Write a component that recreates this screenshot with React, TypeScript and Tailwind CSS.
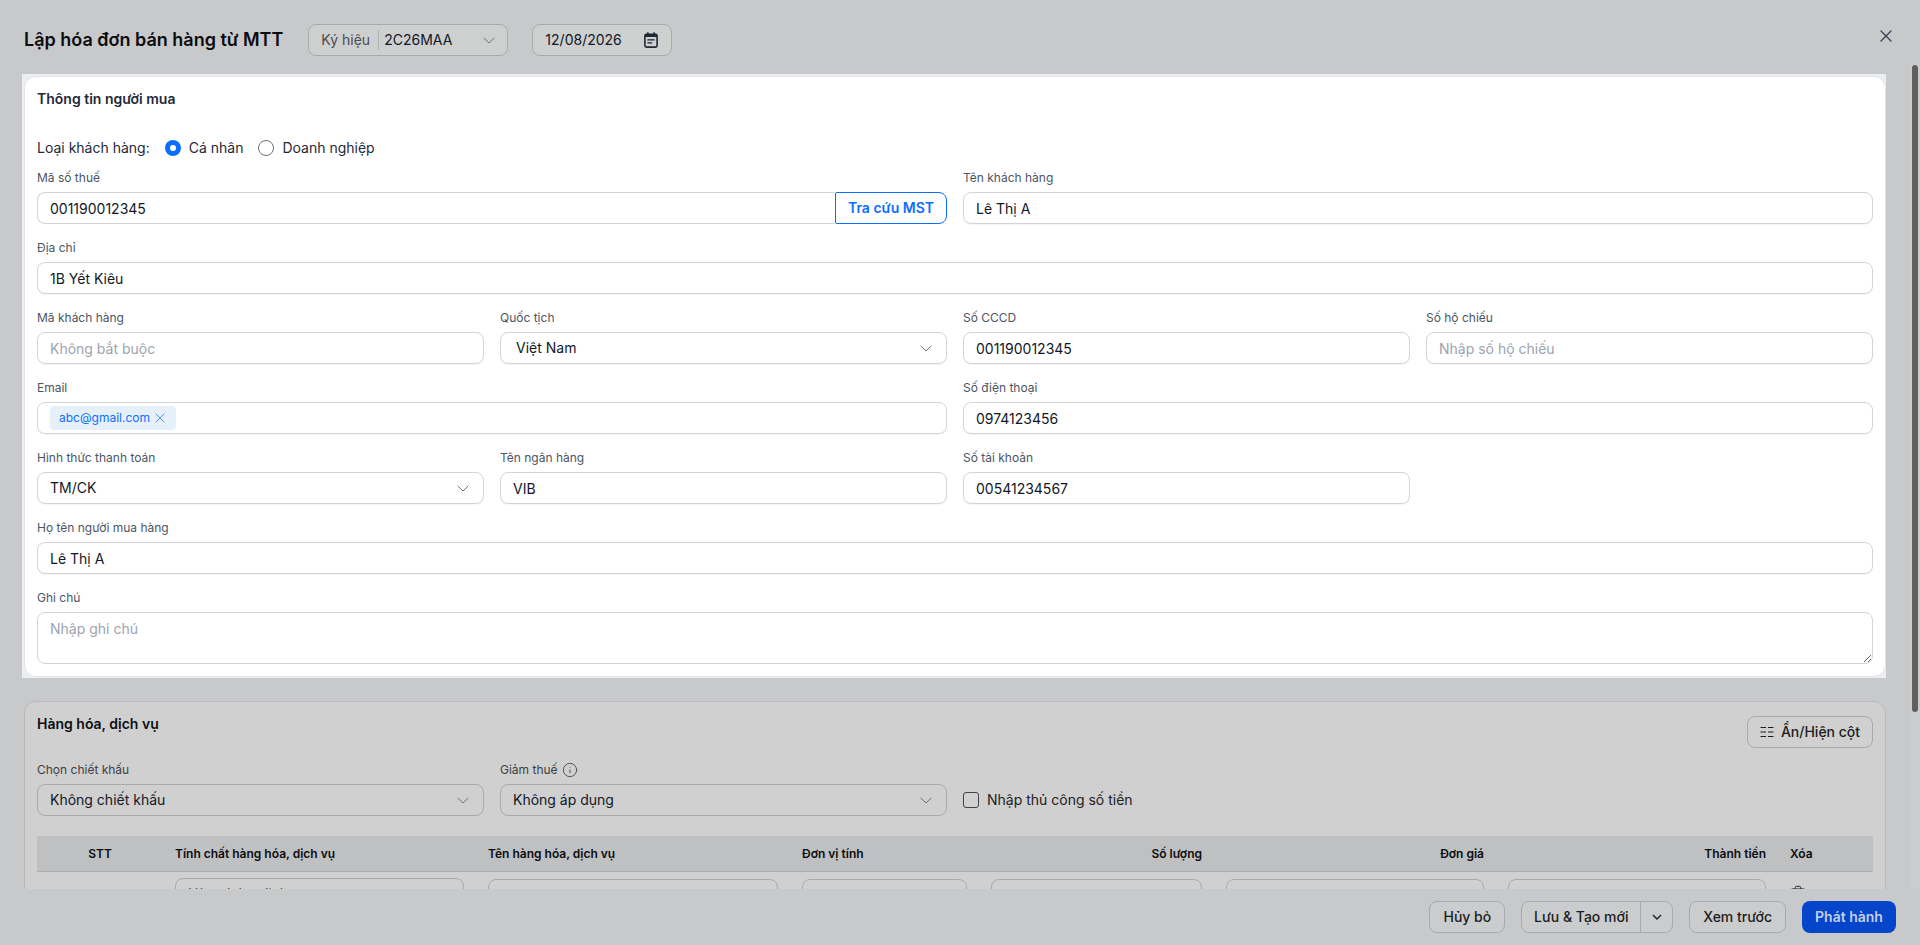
import { Info, Trash2, X } from "lucide-react";
import type { ReactNode } from "react";

function Chevron({ className = "text-[#6b7280]" }: { className?: string }) {
  return (
    <svg width="12" height="7" viewBox="0 0 12 7" fill="none" className={`shrink-0 ${className}`}>
      <path d="M0.6 0.8 L6 6 L11.4 0.8" stroke="currentColor" strokeWidth="1" />
    </svg>
  );
}

function Field({ label, span = "", dim = false, children }: { label: ReactNode; span?: string; dim?: boolean; children: ReactNode }) {
  return (
    <div className={`flex flex-col ${span}`}>
      <div className={`mb-[6px] flex h-4 items-center gap-1 text-xs leading-4 ${dim ? "text-[#3c3f45]" : "text-[#4b5563]"}`}>{label}</div>
      {children}
    </div>
  );
}

function TextBox({ value, placeholder }: { value?: string; placeholder?: string }) {
  return (
    <input
      readOnly
      value={value ?? ""}
      placeholder={placeholder}
      className="h-8 w-full rounded-lg border border-[#d1d5db] bg-white px-3 text-sm text-[#111827] shadow-[0_1px_1px_rgba(0,0,0,0.04)] outline-none placeholder:text-[#9ca3af]"
    />
  );
}

function SelectBox({ value, dim = false, pad = "pl-3" }: { value: string; dim?: boolean; pad?: string }) {
  return (
    <div className={`flex h-8 items-center justify-between rounded-lg border pr-[14px] text-sm text-[#111827] ${pad} ${dim ? "border-[#a9aaad]" : "border-[#d1d5db] bg-white shadow-[0_1px_1px_rgba(0,0,0,0.04)]"}`}>
      <span>{value}</span>
      <Chevron />
    </div>
  );
}

function Radio({ on, label }: { on?: boolean; label: string }) {
  return (
    <span className="flex items-center gap-2">
      {on ? (
        <span className="flex size-4 items-center justify-center rounded-full bg-[#0d6efd]">
          <span className="size-[6px] rounded-full bg-white" />
        </span>
      ) : (
        <span className="size-4 rounded-full border border-[#6b7280] bg-white" />
      )}
      <span>{label}</span>
    </span>
  );
}

function CalendarIcon() {
  return (
    <svg width="14" height="16" viewBox="0 0 14 16" fill="none" className="text-[#1f2937]">
      <rect x="0.9" y="2.4" width="12.2" height="12.7" rx="1.6" stroke="currentColor" strokeWidth="1.6" />
      <rect x="0.9" y="2.4" width="12.2" height="2.6" fill="currentColor" />
      <rect x="3" y="0.4" width="1.7" height="3" fill="currentColor" />
      <rect x="9.3" y="0.4" width="1.7" height="3" fill="currentColor" />
      <rect x="3.4" y="7.2" width="7.2" height="1.3" fill="currentColor" />
      <rect x="3.4" y="10.2" width="4.8" height="1.3" fill="currentColor" />
    </svg>
  );
}

function ColumnsIcon() {
  return (
    <svg width="14" height="12" viewBox="0 0 14 12" fill="none" stroke="currentColor" strokeWidth="1.2">
      <path d="M0.5 1.5H6M8 1.5H13.5M0.5 6H6M8 6H13.5M0.5 10.5H6M8 10.5H13.5" />
    </svg>
  );
}

function FooterButton({ children }: { children: ReactNode }) {
  return (
    <button className="h-8 rounded-lg border border-[#a9aaad] bg-[#cbcccd] px-[13px] text-sm font-medium text-[#1b1d20]">{children}</button>
  );
}

function Th({ children, right = false }: { children: ReactNode; right?: boolean }) {
  return <div className={`px-3 text-xs font-semibold text-[#0c0d0f] ${right ? "text-right" : ""}`}>{children}</div>;
}

function Ghost({ text = "", top = "mt-[7px]" }: { text?: string; top?: string }) {
  return (
    <div className="px-3">
      <div className={`flex h-8 items-center rounded-lg border border-[#a9aaad] px-3 text-sm text-[#4b4c4f] ${top}`}>{text}</div>
    </div>
  );
}

export default function App() {
  return (
    <div className="flex h-[945px] w-[1920px] flex-col overflow-hidden bg-[#c8c9cb] font-[family-name:Inter,sans-serif] text-sm text-[#111827]">
      <header className="flex h-[65px] shrink-0 items-start pl-6 pt-6">
        <h1 className="mt-[3px] text-lg leading-[26px] font-semibold text-[#0b0c0e]">Lập hóa đơn bán hàng từ MTT</h1>
        <div className="ml-[25px] flex h-8 w-[200px] items-center rounded-lg border border-[#a9aaad] bg-[#cecfcf] pl-3 pr-3">
          <span className="text-[#4b4d52]">Ký hiệu</span>
          <span className="ml-2 mr-[5px] h-[20px] w-px bg-[#b0b1b4]" />
          <span className="flex-1">2C26MAA</span>
          <Chevron />
        </div>
        <div className="ml-6 flex h-8 w-[140px] items-center justify-between rounded-lg border border-[#a9aaad] bg-[#cecfcf] pl-3 pr-[13px]">
          <span>12/08/2026</span>
          <CalendarIcon />
        </div>
        <button className="ml-auto mr-6 mt-[2px] text-[#374151]">
          <X size={20} strokeWidth={1.5} />
        </button>
      </header>

      <div className="flex min-h-0 flex-1">
        <div className="min-w-0 flex-1 overflow-hidden pl-6 pr-6 pt-[9px]">
          <div className="-ml-[2px] bg-[#eceef1] pb-px pl-[2px] pt-[2px]">
            <section className="rounded-xl border border-[#e2e4e8] bg-white px-3 pb-3 pt-3">
              <h2 className="text-sm leading-5 font-semibold text-[#1f2937]">Thông tin người mua</h2>
              <div className="mt-[29px] flex h-5 items-center gap-[15px] text-[#1f2937]">
                <span>Loại khách hàng:</span>
                <Radio on label="Cá nhân" />
                <Radio label="Doanh nghiệp" />
              </div>
              <div className="mt-3 grid grid-cols-4 gap-x-4 gap-y-4">
                <Field label="Mã số thuế" span="col-span-2">
                  <div className="flex">
                    <input
                      readOnly
                      value="001190012345"
                      className="h-8 min-w-0 flex-1 rounded-l-lg border border-r-0 border-[#d1d5db] bg-white px-3 text-sm text-[#111827] outline-none"
                    />
                    <button className="h-8 w-[112px] rounded-r-lg rounded-l-[2px] border border-[#0d6efd] text-sm font-semibold text-[#0d6efd]">Tra cứu MST</button>
                  </div>
                </Field>
                <Field label="Tên khách hàng" span="col-span-2">
                  <TextBox value="Lê Thị A" />
                </Field>
                <Field label="Địa chỉ" span="col-span-4">
                  <TextBox value="1B Yết Kiêu" />
                </Field>
                <Field label="Mã khách hàng">
                  <TextBox placeholder="Không bắt buộc" />
                </Field>
                <Field label="Quốc tịch">
                  <SelectBox value="Việt Nam" pad="pl-[15px]" />
                </Field>
                <Field label="Số CCCD">
                  <TextBox value="001190012345" />
                </Field>
                <Field label="Số hộ chiếu">
                  <TextBox placeholder="Nhập số hộ chiếu" />
                </Field>
                <Field label="Email" span="col-span-2">
                  <div className="flex h-8 items-center rounded-lg border border-[#d1d5db] bg-white pl-3 shadow-[0_1px_1px_rgba(0,0,0,0.04)]">
                    <span className="flex h-6 w-[126px] items-center gap-[2px] rounded bg-[#e6f0fb] pl-[9px] text-xs text-[#0d6efd]">
                      abc@gmail.com
                      <X size={16} strokeWidth={1.1} />
                    </span>
                  </div>
                </Field>
                <Field label="Số điện thoại" span="col-span-2">
                  <TextBox value="0974123456" />
                </Field>
                <Field label="Hình thức thanh toán">
                  <SelectBox value="TM/CK" />
                </Field>
                <Field label="Tên ngân hàng">
                  <TextBox value="VIB" />
                </Field>
                <Field label="Số tài khoản">
                  <TextBox value="00541234567" />
                </Field>
                <div />
                <Field label="Họ tên người mua hàng" span="col-span-4">
                  <TextBox value="Lê Thị A" />
                </Field>
                <Field label="Ghi chú" span="col-span-4">
                  <textarea
                    readOnly
                    placeholder="Nhập ghi chú"
                    className="block h-[52px] w-full rounded-lg border border-[#d1d5db] bg-white px-3 py-[6px] text-sm leading-5 outline-none placeholder:text-[#9ca3af]"
                  />
                </Field>
              </div>
            </section>
          </div>

          <section className="mt-[23px] h-[300px] rounded-xl border border-[#b9babd] bg-[#d0d0d0] px-3 pt-3">
            <div className="flex items-start justify-between">
              <h2 className="text-sm leading-5 font-semibold text-[#0e0f11]">Hàng hóa, dịch vụ</h2>
              <button className="mt-[2px] flex h-8 w-[126px] items-center justify-center gap-[7px] rounded-lg border border-[#a9aaad] text-sm font-medium text-[#1b1d20]">
                <ColumnsIcon />
                Ẩn/Hiện cột
              </button>
            </div>
            <div className="mt-[14px] grid grid-cols-4 items-end gap-x-4">
              <Field dim label="Chọn chiết khấu">
                <SelectBox dim value="Không chiết khấu" />
              </Field>
              <Field
                dim
                label={
                  <>
                    Giảm thuế <Info size={16} strokeWidth={1.25} />
                  </>
                }
              >
                <SelectBox dim value="Không áp dụng" />
              </Field>
              <label className="flex h-8 items-center gap-2">
                <span className="size-4 rounded-[3px] border border-[#3f434a]" />
                <span className="text-[#1f2124]">Nhập thủ công số tiền</span>
              </label>
            </div>
            <div className="mt-5 grid h-9 grid-cols-[126px_313px_314px_189px_235px_282px_282px_95px] items-center rounded-t-[2px] border-b border-[#aeafb3] bg-[#bfc0c2]">
              <div className="text-center text-xs font-semibold text-[#0c0d0f]">STT</div>
              <Th>Tính chất hàng hóa, dịch vụ</Th>
              <Th>Tên hàng hóa, dịch vụ</Th>
              <Th>Đơn vị tính</Th>
              <Th right>Số lượng</Th>
              <Th right>Đơn giá</Th>
              <Th right>Thành tiền</Th>
              <Th>Xóa</Th>
            </div>
            <div className="grid grid-cols-[126px_313px_314px_189px_235px_282px_282px_95px]">
              <div />
              <Ghost text="Hàng hóa, dịch vụ" top="mt-[6px]" />
              <Ghost />
              <Ghost />
              <Ghost />
              <Ghost />
              <Ghost />
              <div className="px-3 pt-[13px] text-[#26282c]">
                <Trash2 size={16} strokeWidth={1.5} />
              </div>
            </div>
          </section>
        </div>
        <div className="w-[10px] shrink-0 rounded-b-md bg-[#cbcccd] px-[2px]">
          <div className="h-[647px] rounded-full bg-[#5f5f5f]" />
        </div>
      </div>

      <footer className="flex h-14 shrink-0 items-center justify-end gap-4 bg-[#c8c9cb] pr-6">
        <FooterButton>Hủy bỏ</FooterButton>
        <div className="flex h-8 items-center rounded-lg border border-[#a9aaad] bg-[#cbcccd] text-sm font-medium text-[#1b1d20]">
          <span className="flex h-full w-[119px] items-center justify-center border-r border-[#a9aaad]">Lưu &amp; Tạo mới</span>
          <span className="flex w-[31px] items-center justify-center">
            <svg width="10" height="6" viewBox="0 0 10 6" fill="none" stroke="currentColor" strokeWidth="1.4">
              <path d="M1 1L5 5L9 1" />
            </svg>
          </span>
        </div>
        <FooterButton>Xem trước</FooterButton>
        <button className="h-8 w-[94px] rounded-lg bg-[#0445cc] text-sm font-semibold text-[#c4cee4]">Phát hành</button>
      </footer>
    </div>
  );
}
